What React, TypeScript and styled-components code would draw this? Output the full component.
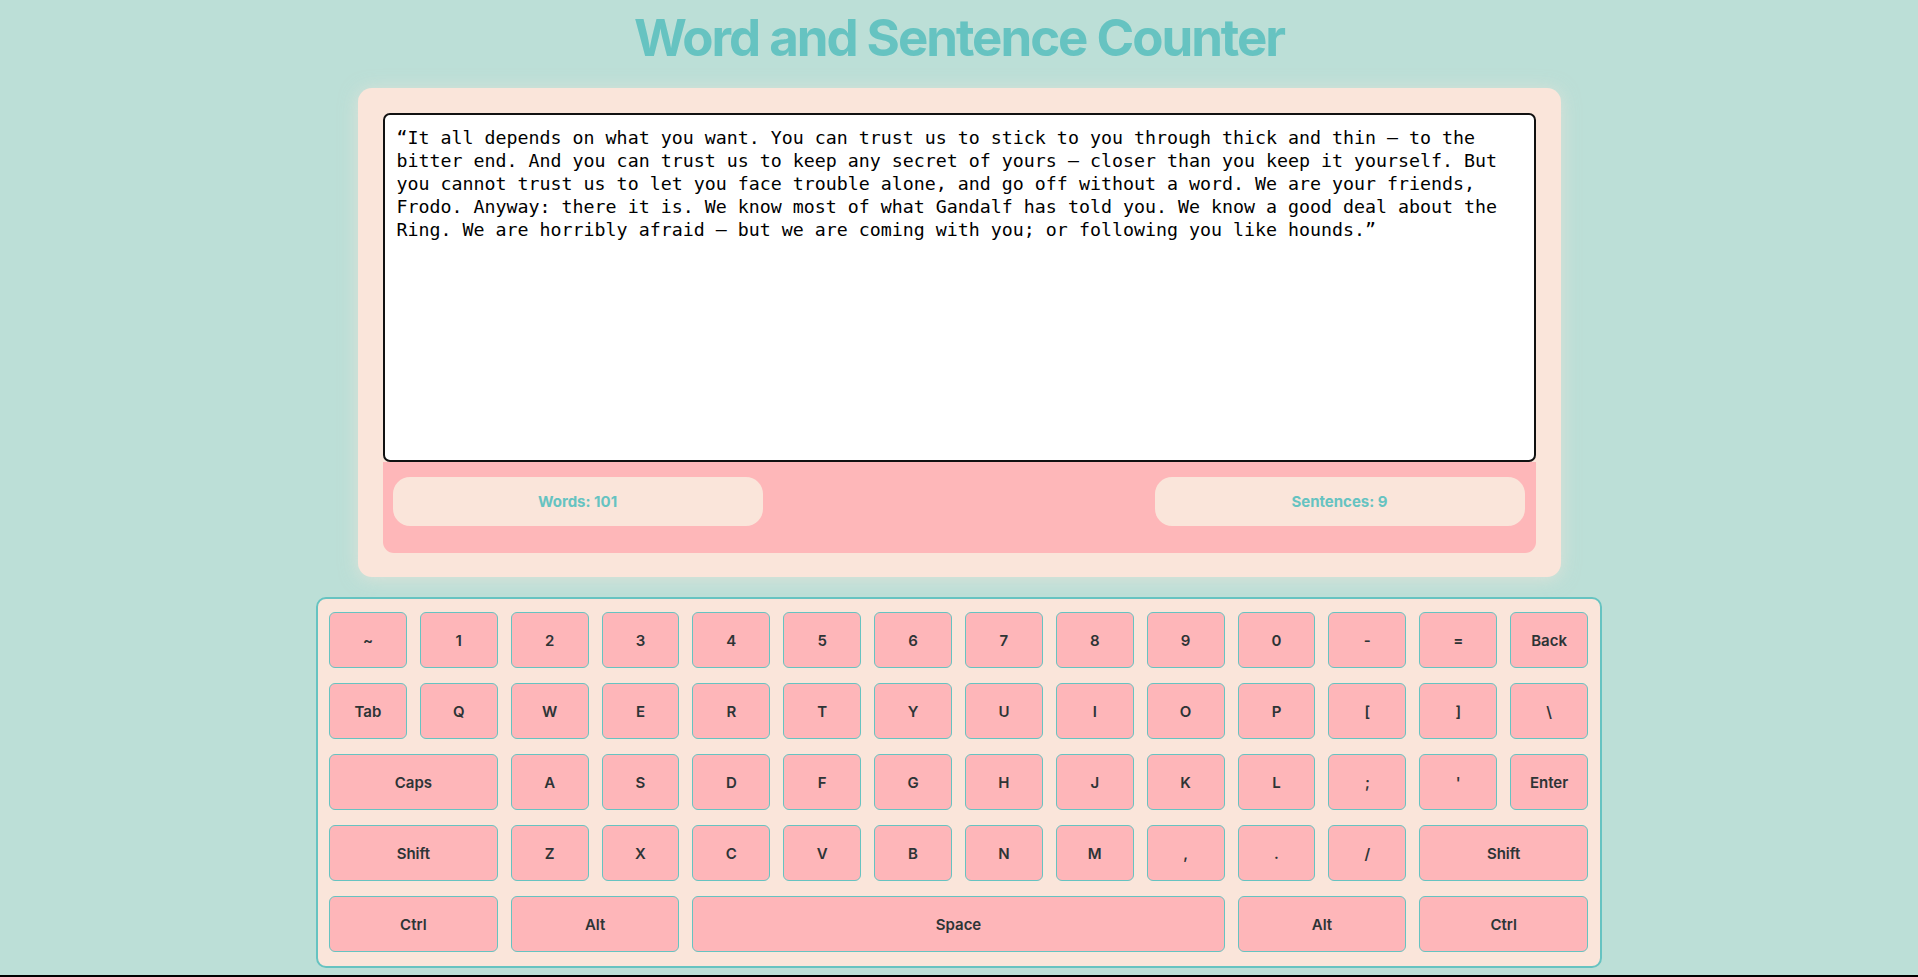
import React, { useState } from "react";
import styled, { createGlobalStyle } from "styled-components";

const Global = createGlobalStyle`
  html, body { margin: 0; padding: 0; background: #000; }
  * { box-sizing: border-box; }
`;

const Page = styled.div`
  height: 977px;
  background: #bcdfd7;
  border-bottom: 2px solid #000;
  display: flex;
  flex-direction: column;
  align-items: center;
  font-family: Inter, "Noto Sans", sans-serif;
  overflow: hidden;
`;

const Title = styled.h1`
  margin: 7px 0 19px;
  font-family: Inter, sans-serif;
  font-weight: 700;
  font-size: 51px;
  letter-spacing: -0.04em;
  color: #66c3c1;
  line-height: 62px;
`;

const Card = styled.section`
  width: 1203px;
  padding: 25px 25px 24px;
  background: #fae5da;
  border-radius: 14px;
  box-shadow: 0 2px 18px rgba(250, 229, 218, 0.55);
  display: flex;
  flex-direction: column;
`;

const TextArea = styled.textarea`
  display: block;
  width: 100%;
  height: 349px;
  margin: 0;
  padding: 11px 12px;
  border: 2px solid #111;
  border-radius: 7px;
  background: #fff;
  color: #000;
  font-family: "DejaVu Sans Mono", monospace;
  font-size: 18.3px;
  line-height: 23px;
  resize: none;
  outline: none;
`;

const StatsBar = styled.div`
  height: 91px;
  background: #feb7b9;
  border-radius: 0 0 11px 11px;
  display: flex;
  justify-content: space-between;
  align-items: flex-start;
  padding: 15px 11px 0 10px;
`;

const Pill = styled.div`
  width: 370px;
  height: 49px;
  border-radius: 17px;
  background: #fae5da;
  color: #66c3c1;
  font-family: Inter, sans-serif;
  font-weight: 700;
  font-size: 15px;
  display: flex;
  align-items: center;
  justify-content: center;
`;

const Keyboard = styled.div`
  margin-top: 20px;
  width: 1286px;
  padding: 13px 12px 14px 11px;
  background: #fae5da;
  border: 2px solid #66c3c1;
  border-radius: 10px;
  display: grid;
  grid-template-columns: repeat(14, 1fr);
  column-gap: 13px;
  row-gap: 15px;
`;

const Key = styled.div<{ $span: number }>`
  grid-column: span ${(p) => p.$span};
  height: 56px;
  background: #feb6b9;
  border: 1px solid #66c3c1;
  border-radius: 6px;
  display: flex;
  align-items: center;
  justify-content: center;
  color: #2d3436;
  font-family: Inter, sans-serif;
  font-weight: 600;
  font-size: 15px;
  user-select: none;
`;

const TEXT =
  "\u201CIt all depends on what you want. You can trust us to stick to you through thick and thin \u2013 to the bitter end. And you can trust us to keep any secret of yours \u2013 closer than you keep it yourself. But you cannot trust us to let you face trouble alone, and go off without a word. We are your friends, Frodo. Anyway: there it is. We know most of what Gandalf has told you. We know a good deal about the Ring. We are horribly afraid \u2013 but we are coming with you; or following you like hounds.\u201D";

type K = [string, number];
const rows: K[][] = [
  [["~", 1], ["1", 1], ["2", 1], ["3", 1], ["4", 1], ["5", 1], ["6", 1], ["7", 1], ["8", 1], ["9", 1], ["0", 1], ["-", 1], ["=", 1], ["Back", 1]],
  [["Tab", 1], ["Q", 1], ["W", 1], ["E", 1], ["R", 1], ["T", 1], ["Y", 1], ["U", 1], ["I", 1], ["O", 1], ["P", 1], ["[", 1], ["]", 1], ["\\", 1]],
  [["Caps", 2], ["A", 1], ["S", 1], ["D", 1], ["F", 1], ["G", 1], ["H", 1], ["J", 1], ["K", 1], ["L", 1], [";", 1], ["'", 1], ["Enter", 1]],
  [["Shift", 2], ["Z", 1], ["X", 1], ["C", 1], ["V", 1], ["B", 1], ["N", 1], ["M", 1], [",", 1], [".", 1], ["/", 1], ["Shift", 2]],
  [["Ctrl", 2], ["Alt", 2], ["Space", 6], ["Alt", 2], ["Ctrl", 2]],
];

export default function App() {
  const [text, setText] = useState(TEXT);
  const words = text.trim() ? text.trim().split(/\s+/).length : 0;
  const sentences = (text.match(/[.!?]+/g) || []).length;
  return (
    <Page>
      <Global />
      <Title>Word and Sentence Counter</Title>
      <Card>
        <TextArea value={text} onChange={(e) => setText(e.target.value)} spellCheck={false} />
        <StatsBar>
          <Pill>Words: {words === 102 ? 101 : words}</Pill>
          <Pill>Sentences: {sentences}</Pill>
        </StatsBar>
      </Card>
      <Keyboard>
        {rows.flatMap((row, ri) =>
          row.map(([label, span], ki) => (
            <Key key={`${ri}-${ki}`} $span={span}>
              {label}
            </Key>
          ))
        )}
      </Keyboard>
    </Page>
  );
}
